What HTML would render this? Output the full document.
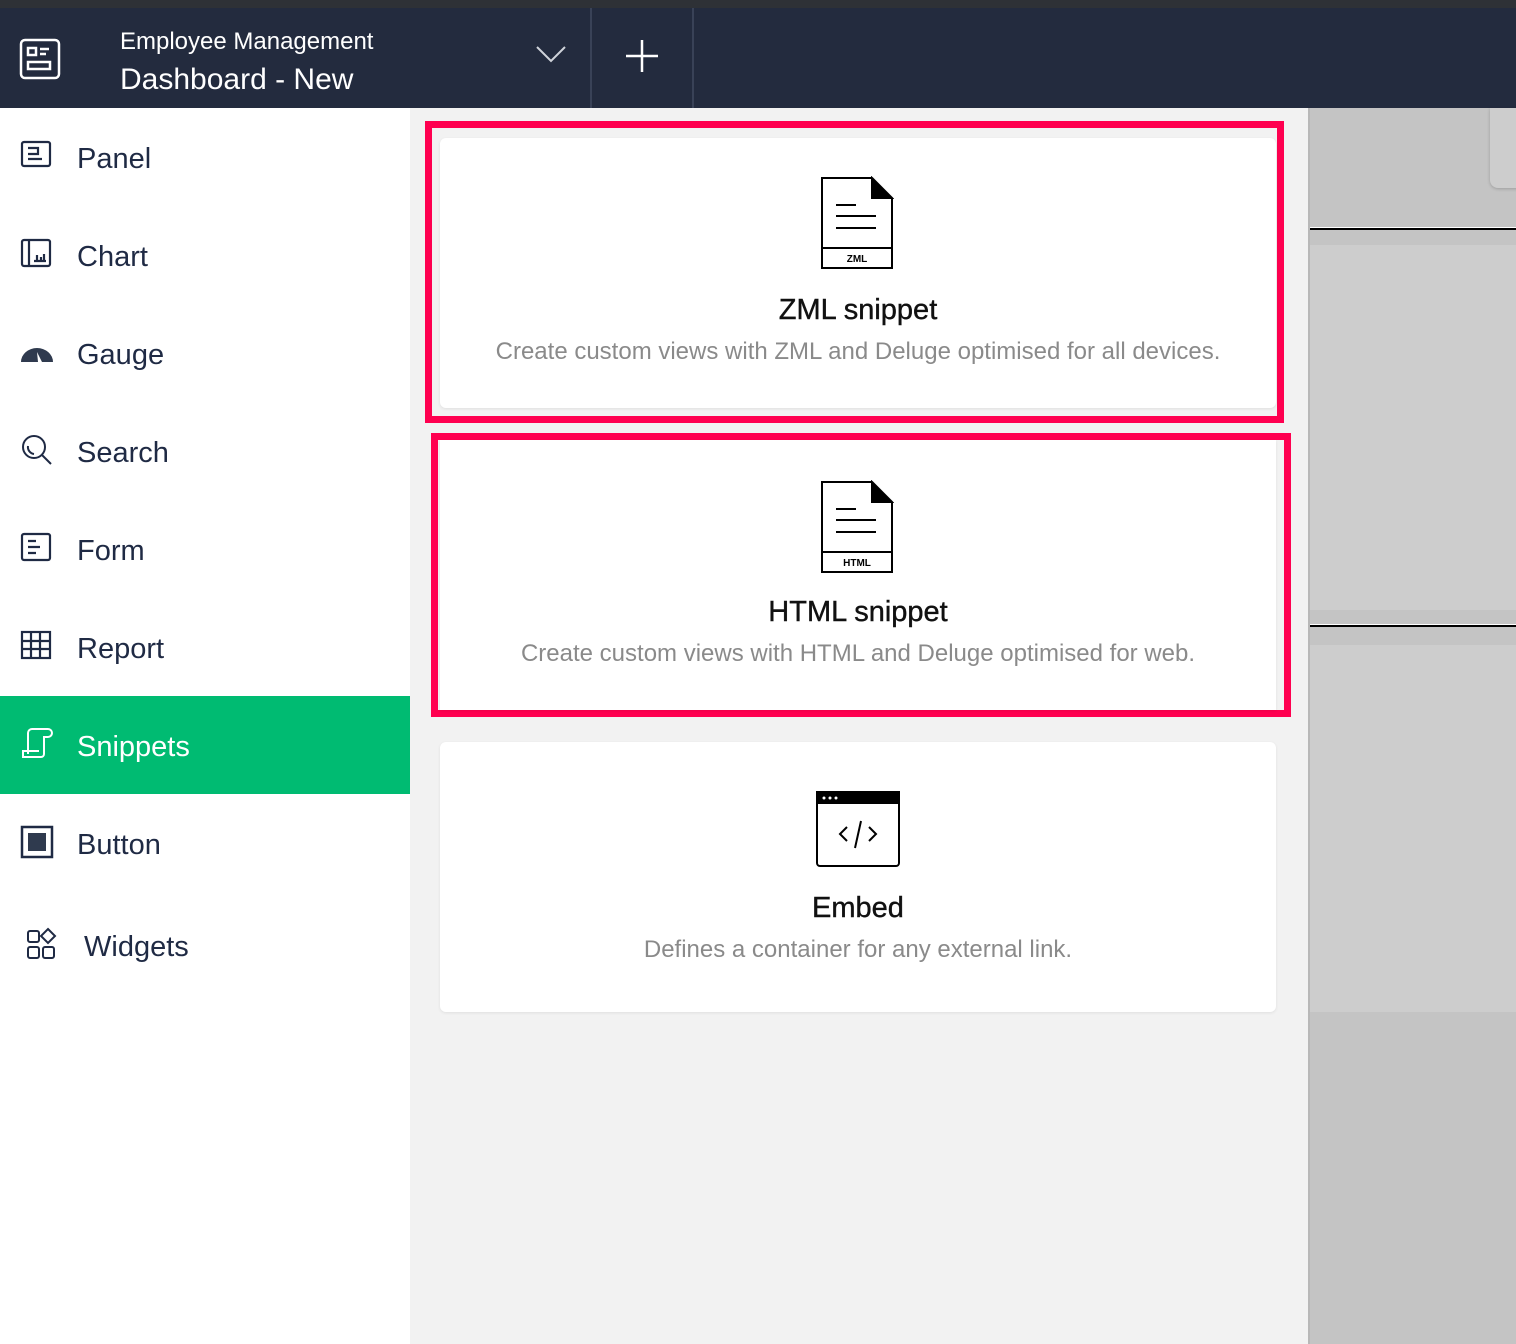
<!DOCTYPE html>
<html><head><meta charset="utf-8"><style>
*{margin:0;padding:0;box-sizing:border-box}
body{width:1516px;height:1344px;position:relative;overflow:hidden;font-family:"Liberation Sans",sans-serif;background:#f2f2f2}
.a{position:absolute}
.item{position:absolute;left:0;width:410px;height:98px;color:#1f2a44;font-size:29px}
.item span{position:absolute;left:77px;top:35px}
.item svg{position:absolute;left:20px;top:31px}
.card{position:absolute;background:#fff;border-radius:6px;text-align:center;box-shadow:0 1px 3px rgba(0,0,0,.08)}
.card h3{position:absolute;left:0;right:0;font-size:29px;font-weight:normal;color:#111;-webkit-text-stroke:0.4px #111}
.card p{position:absolute;left:0;right:0;font-size:24px;color:#8a8a8a}
</style></head><body>
<div class="a" style="left:0;top:0;width:1516px;height:8px;background:#2e3136"></div>
<div class="a" style="left:0;top:8px;width:1516px;height:100px;background:#232b3e"></div>
<div class="a" style="left:590px;top:8px;width:2px;height:100px;background:#394257"></div>
<div class="a" style="left:692px;top:8px;width:2px;height:100px;background:#394257"></div>
<svg class="a" style="left:19px;top:38px" width="42" height="42" viewBox="0 0 42 42" fill="none" stroke="#fff" stroke-width="2.5"><rect x="2" y="2" width="38" height="38" rx="4"/><rect x="9" y="10" width="8" height="7"/><path d="M21 11h9M21 16h6"/><rect x="9" y="24" width="22" height="7"/></svg>
<div class="a" style="left:120px;top:28px;color:#fff;font-size:24px">Employee Management</div>
<div class="a" style="left:120px;top:63px;color:#fff;font-size:30px">Dashboard - New</div>
<svg class="a" style="left:535px;top:44px" width="32" height="20"><path d="M2 3l14 14 14-14" stroke="#cfd3da" stroke-width="2" fill="none"/></svg>
<svg class="a" style="left:624px;top:38px" width="36" height="36"><path d="M18 2v32M2 18h32" stroke="#fff" stroke-width="2.5"/></svg>

<div class="a" style="left:0;top:108px;width:410px;height:1236px;background:#fff"></div>
<div class="item" style="top:108px"><svg width="32" height="32" fill="none" stroke="#1f2a44" stroke-width="2.2"><rect x="2" y="3" width="28" height="24" rx="2"/><path d="M8 9h10v6H8M8 20h14"/></svg><span>Panel</span></div>
<div class="item" style="top:206px"><svg width="32" height="32" fill="none" stroke="#1f2a44" stroke-width="2.2"><rect x="2" y="3" width="28" height="26" rx="2"/><path d="M9 3v26M14 24h12M17 18v6M21 20v4M24 17v7"/></svg><span>Chart</span></div>
<div class="item" style="top:304px"><svg width="34" height="32"><path d="M1 27a16 14 0 0 1 32 0h-11l-5-10 1 10z" fill="#2f3a4e"/></svg><span>Gauge</span></div>
<div class="item" style="top:402px"><svg width="34" height="34" fill="none" stroke="#1f2a44" stroke-width="2"><circle cx="14" cy="14" r="11"/><path d="M22 22l9 9M8 13a7 7 0 0 0 6 8"/></svg><span>Search</span></div>
<div class="item" style="top:500px"><svg width="32" height="32" fill="none" stroke="#1f2a44" stroke-width="2.2"><rect x="2" y="3" width="28" height="26" rx="2"/><path d="M8 10h8M8 16h12M8 22h8"/></svg><span>Form</span></div>
<div class="item" style="top:598px"><svg width="32" height="32" fill="none" stroke="#1f2a44" stroke-width="2.2"><rect x="2" y="3" width="28" height="26"/><path d="M11 3v26M20 3v26M2 12h28M2 20h28"/></svg><span>Report</span></div>
<div class="item" style="top:696px;background:#00bb72;color:#fff"><svg width="34" height="32" fill="none" stroke="#fff" stroke-width="2"><path d="M8 27V6a4 4 0 0 1 4-4h16a4 4 0 0 1 0 8h-4v17a3 3 0 0 1-3 3H3v-6h16"/></svg><span>Snippets</span></div>
<div class="item" style="top:794px"><svg width="34" height="34"><rect x="2" y="2" width="30" height="30" fill="none" stroke="#1f2a44" stroke-width="2.5"/><rect x="8" y="8" width="18" height="18" fill="#2f3a4e"/></svg><span>Button</span></div>
<div class="item" style="top:896px"><svg width="40" height="36" style="left:26px" fill="none" stroke="#1f2a44" stroke-width="2"><rect x="2" y="4" width="11" height="11" rx="2"/><rect x="2" y="20" width="11" height="11" rx="2"/><rect x="17" y="20" width="11" height="11" rx="2"/><path d="M22 2l7 7-7 7-7-7z"/></svg><span style="left:84px">Widgets</span></div>

<div class="a" style="left:1308px;top:108px;width:208px;height:1236px;background:#c4c4c4;border-left:2px solid #b8b8b8"></div>
<div class="a" style="left:1490px;top:108px;width:30px;height:80px;background:#cdcdcd;border-radius:0 0 0 8px;box-shadow:0 1px 3px rgba(0,0,0,.2)"></div>
<div class="a" style="left:1310px;top:227px;width:206px;height:3px;background:#000;border-top:1px solid #fff"></div>
<div class="a" style="left:1310px;top:245px;width:206px;height:365px;background:#cdcdcd"></div>
<div class="a" style="left:1310px;top:624px;width:206px;height:3px;background:#000;border-top:1px solid #fff"></div>
<div class="a" style="left:1310px;top:645px;width:206px;height:367px;background:#cdcdcd"></div>

<div class="a" style="left:425px;top:121px;width:859px;height:302px;border:7px solid #ff0050"></div>
<div class="card" style="left:440px;top:138px;width:836px;height:270px">
<svg class="a" style="left:380px;top:38px" width="74" height="94" fill="none" stroke="#000" stroke-width="2"><path d="M2 2h50l20 20v70H2z"/><path d="M52 2l20 20H52z" fill="#000"/><path d="M2 72h70M16 29h20M16 40h40M16 52h40"/><text x="37" y="86" font-size="10" font-weight="bold" text-anchor="middle" fill="#000" stroke="none" font-family="Liberation Sans">ZML</text></svg>
<h3 style="top:156px">ZML snippet</h3><p style="top:200px">Create custom views with ZML and Deluge optimised for all devices.</p></div>

<div class="a" style="left:431px;top:433px;width:860px;height:284px;border:7px solid #ff0050"></div>
<div class="card" style="left:440px;top:440px;width:836px;height:270px;border-radius:0">
<svg class="a" style="left:380px;top:40px" width="74" height="94" fill="none" stroke="#000" stroke-width="2"><path d="M2 2h50l20 20v70H2z"/><path d="M52 2l20 20H52z" fill="#000"/><path d="M2 72h70M16 29h20M16 40h40M16 52h40"/><text x="37" y="86" font-size="10" font-weight="bold" text-anchor="middle" fill="#000" stroke="none" font-family="Liberation Sans">HTML</text></svg>
<h3 style="top:156px">HTML snippet</h3><p style="top:200px">Create custom views with HTML and Deluge optimised for web.</p></div>

<div class="card" style="left:440px;top:742px;width:836px;height:270px">
<svg class="a" style="left:375px;top:48px" width="86" height="80" fill="none" stroke="#000" stroke-width="2"><rect x="2" y="2" width="82" height="74" rx="3"/><rect x="2" y="2" width="82" height="11" fill="#000"/><circle cx="9" cy="8" r="1.5" fill="#fff" stroke="none"/><circle cx="15" cy="8" r="1.5" fill="#fff" stroke="none"/><circle cx="21" cy="8" r="1.5" fill="#fff" stroke="none"/><path d="M32 37l-7 7 7 7M54 37l7 7-7 7M46 31l-6 27"/></svg>
<h3 style="top:150px">Embed</h3><p style="top:194px">Defines a container for any external link.</p></div>
</body></html>
